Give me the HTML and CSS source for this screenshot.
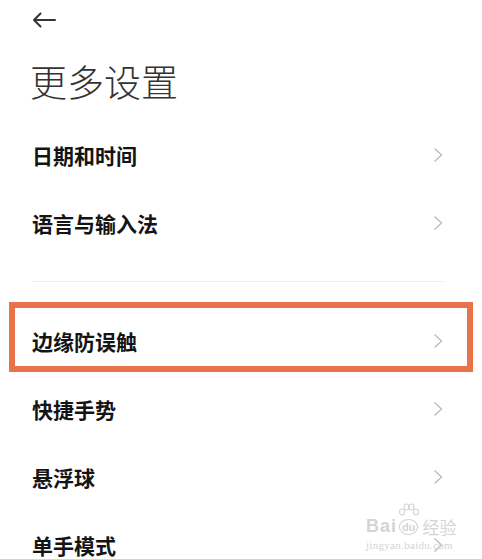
FILE: index.html
```html
<!DOCTYPE html>
<html lang="zh-CN">
<head>
<meta charset="utf-8">
<link rel="stylesheet" href="styles.css">
</head>
<body>
<div class="page">
  <div class="topbar">
    <svg class="back" width="24" height="16" viewBox="0 0 24 16"><path d="M23 8H2M8.5 1.5L2 8l6.5 6.5" fill="none" stroke="#333" stroke-width="2" stroke-linecap="round" stroke-linejoin="round"/></svg>
  </div>
  <h1 class="title">更多设置</h1>
  <div class="group">
    <div class="row"><span class="label">日期和时间</span><svg class="chev" width="10" height="16" viewBox="0 0 10 16"><path d="M1.5 1.5L8.5 8l-7 6.5" fill="none" stroke="#bdbdbd" stroke-width="1.4"/></svg></div>
    <div class="row"><span class="label">语言与输入法</span><svg class="chev" width="10" height="16" viewBox="0 0 10 16"><path d="M1.5 1.5L8.5 8l-7 6.5" fill="none" stroke="#bdbdbd" stroke-width="1.4"/></svg></div>
  </div>
  <div class="divider-wrap"><div class="divider"></div></div>
  <div class="group">
    <div class="row highlighted"><span class="label">边缘防误触</span><svg class="chev" width="10" height="16" viewBox="0 0 10 16"><path d="M1.5 1.5L8.5 8l-7 6.5" fill="none" stroke="#bdbdbd" stroke-width="1.4"/></svg><div class="mark"></div></div>
    <div class="row"><span class="label">快捷手势</span><svg class="chev" width="10" height="16" viewBox="0 0 10 16"><path d="M1.5 1.5L8.5 8l-7 6.5" fill="none" stroke="#bdbdbd" stroke-width="1.4"/></svg></div>
    <div class="row"><span class="label">悬浮球</span><svg class="chev" width="10" height="16" viewBox="0 0 10 16"><path d="M1.5 1.5L8.5 8l-7 6.5" fill="none" stroke="#bdbdbd" stroke-width="1.4"/></svg></div>
    <div class="row"><span class="label">单手模式</span><svg class="chev" width="10" height="16" viewBox="0 0 10 16"><path d="M1.5 1.5L8.5 8l-7 6.5" fill="none" stroke="#bdbdbd" stroke-width="1.4"/></svg></div>
  </div>
  <div class="watermark">
    <svg class="wm-paw" width="22" height="14" viewBox="0 0 22 14"><g fill="none" stroke="#d4d4d4" stroke-width="1.2"><ellipse cx="4" cy="9" rx="2.5" ry="3"/><ellipse cx="8.5" cy="4" rx="2.5" ry="3"/><ellipse cx="13.5" cy="4" rx="2.5" ry="3"/><ellipse cx="18" cy="9" rx="2.5" ry="3"/></g></svg>
    <div class="wm-top"><span class="wm-bai">Bai</span><span class="wm-du">du</span><span class="wm-jy">经验</span></div>
    <div class="wm-url">jingyan.baidu.com</div>
  </div>
</div>
</body>
</html>
```
FILE: styles.css
```css
html, body {
  margin: 0;
  padding: 0;
  background: #ffffff;
}
.page {
  position: relative;
  width: 482px;
  height: 559px;
  overflow: hidden;
  font-family: "Noto Sans CJK SC", "Noto Sans", sans-serif;
  color: #111;
}
.topbar {
  height: 40px;
  display: flex;
  align-items: center;
  padding-left: 32px;
}
.back {
  display: block;
}
.title {
  margin: 0;
  padding: 16px 0 15px 30px;
  font-size: 37px;
  line-height: 50px;
  font-weight: 300;
  color: #333;
}
.group {
  display: flex;
  flex-direction: column;
}
.row {
  position: relative;
  height: 68px;
  display: flex;
  align-items: center;
  justify-content: space-between;
  padding: 0 39px 0 32px;
}
.label {
  font-size: 21px;
  font-weight: 600;
  color: #141414;
}
.chev {
  display: block;
}
.divider-wrap {
  padding: 24px 39px 25px 32px;
}
.divider {
  height: 1px;
  background: #ececec;
}
.mark {
  position: absolute;
  left: 9px;
  right: 9px;
  top: -5px;
  bottom: 3px;
  border: 6px solid #e8734b;
}
.watermark {
  position: absolute;
  left: 366px;
  top: 503px;
  color: #d4d4d4;
}
.wm-paw {
  display: block;
  margin-left: 32px;
  margin-bottom: -3px;
}
.wm-top {
  display: flex;
  align-items: center;
  gap: 2px;
  font-family: "Liberation Sans", sans-serif;
}
.wm-bai {
  font-size: 18px;
  font-weight: 700;
  letter-spacing: 1px;
}
.wm-du {
  font-size: 11px;
  font-weight: 700;
  border: 1.5px solid #d4d4d4;
  border-radius: 50%;
  padding: 1px 2px;
}
.wm-jy {
  font-family: "Noto Sans CJK SC", sans-serif;
  font-size: 17px;
  margin-left: 2px;
}
.wm-url {
  font-family: "Liberation Serif", serif;
  font-size: 11px;
  margin-top: 0;
  letter-spacing: 0.3px;
}
```
